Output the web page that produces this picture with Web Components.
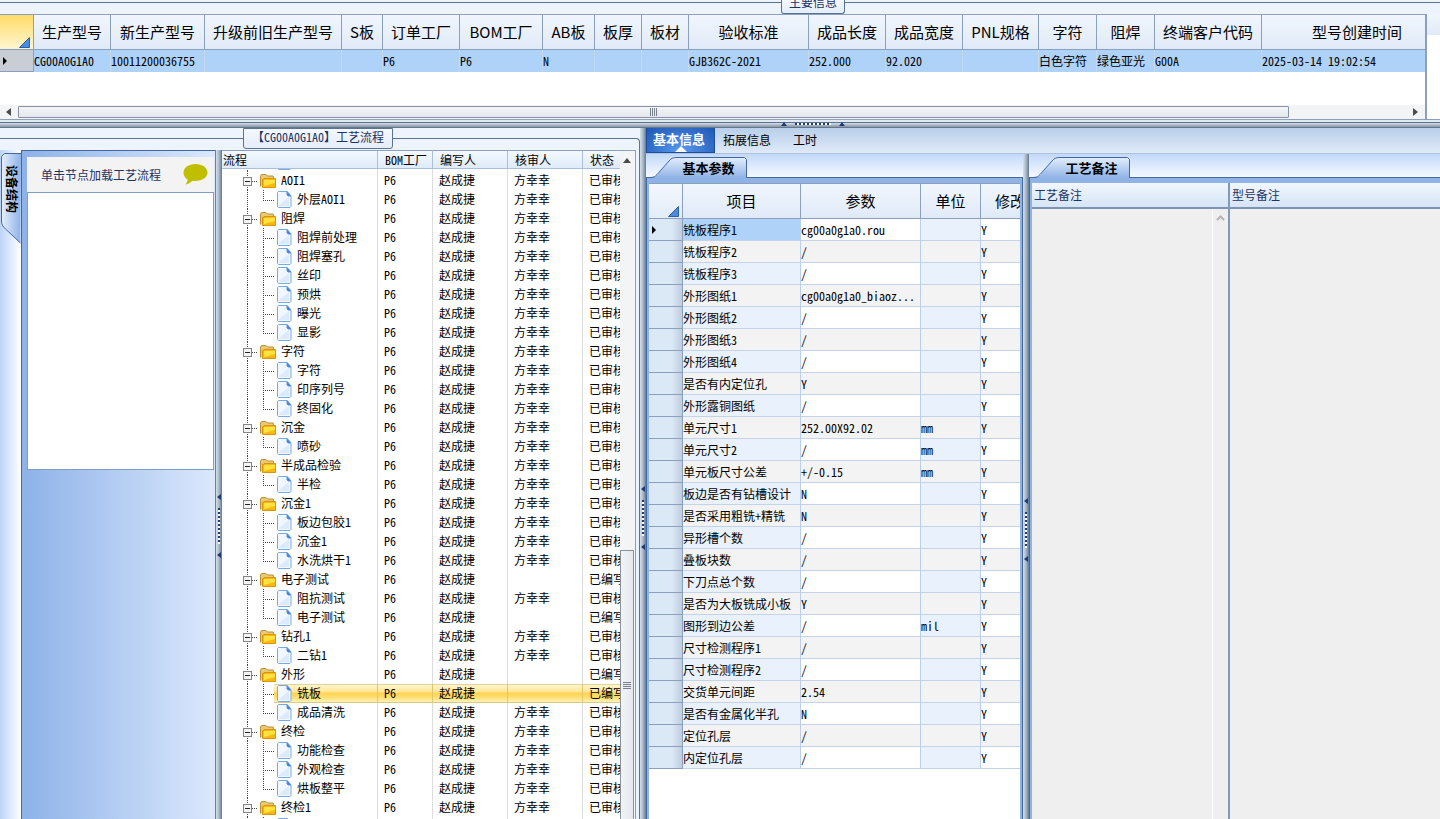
<!DOCTYPE html>
<html lang="zh-CN">
<head>
<meta charset="UTF-8">
<title>工艺流程</title>
<style>
    html, body {
        height: 100%;
        margin: 0;
        overflow: hidden;
    }

    body {
        display: flex;
        flex-direction: column;
        background: #ebf3fd;
        color: #000;
        font: 12px/16px "Noto Sans Mono CJK SC", "Noto Sans CJK SC", "Liberation Sans", sans-serif;
        font-variant-ligatures: none;
        --line: #8aa0bd;
        --dark: #5b7290;
        --blue: #8fb3e6;
        --ink: #1e3264;
    }

    .top {
        display: flex;
        height: 105px;
        border-bottom: 1px solid var(--line);
    }

    .top-left {
        display: flex;
        flex: 1;
        flex-direction: column;
        min-width: 0;
        background: #fff;
    }

    .top-left data-grid {
        flex: 1;
        min-height: 0;
    }

    .top-rest {
        width: 13px;
        border-left: 2px solid var(--line);
        background: linear-gradient(#f1f6fd, #e0eaf7) top / 100% 21px no-repeat #fff;
    }

    .main {
        display: flex;
        flex: 1;
        min-height: 0;
    }

    .flow {
        display: flex;
        flex: 0 0 640px;
        min-width: 0;
    }

    .flow group-panel {
        flex: 1;
        min-width: 0;
    }

    .flow-body {
        display: flex;
        flex: 1;
        min-height: 0;
    }

    .info {
        display: flex;
        flex: 1;
        flex-direction: column;
        min-width: 0;
    }

    .info-body {
        display: flex;
        flex: 1;
        min-height: 0;
    }

    .params {
        flex: 0 0 377px;
    }

    .notes {
        flex: 1;
        min-width: 0;
    }
</style>
</head>
<body>
    <group-panel label="主要信息" class="main-info">
        <div class="top">
            <div class="top-left">
                <data-grid id="models"></data-grid>
                <scroll-bar></scroll-bar>
            </div>
            <div class="top-rest"></div>
        </div>
    </group-panel>
    <split-bar style="--grip: 784px"></split-bar>
    <div class="main">
        <div class="flow">
            <group-panel label="【CG00A0G1A0】工艺流程" framed>
                <div class="flow-body">
                    <device-panel></device-panel>
                    <split-bar vertical style="--grip: 344px"></split-bar>
                    <flow-tree></flow-tree>
                    <scroll-bar vertical></scroll-bar>
                </div>
            </group-panel>
        </div>
        <split-bar vertical style="--grip: 358px"></split-bar>
        <div class="info">
            <info-tabs></info-tabs>
            <div class="info-body">
                <tab-page label="基本参数" class="params">
                    <data-grid id="params" boxed></data-grid>
                </tab-page>
                <split-bar vertical style="--grip: 344px"></split-bar>
                <tab-page label="工艺备注" class="notes" open-end>
                    <note-panel></note-panel>
                </tab-page>
            </div>
        </div>
    </div>

<script>
// 分组框
class GroupPanel extends HTMLElement {
    constructor() {
        super();
        this.attachShadow({mode: 'open'});
    }

    connectedCallback() {
        const label = this.getAttribute('label');

        this.shadowRoot.innerHTML = `
            <style>
                :host {
                    display: flex;
                    flex-direction: column;
                    background: linear-gradient(#edf4fd, #e8f1fc);
                }

                .head {
                    display: flex;
                    height: 14px;
                    color: var(--ink);
                }

                .rule {
                    height: 2px;
                    box-sizing: border-box;
                    border-bottom: 1px solid var(--dark);
                    margin-top: 1px;
                }

                .before { flex: 781; }
                .after { flex: 595; }

                .label {
                    display: flex;
                    align-items: flex-end;
                    box-sizing: border-box;
                    padding: 0 7px;
                    border: 1px solid var(--dark);
                    border-top: 0;
                    border-radius: 0 0 3px 3px;
                    line-height: 22px;
                    background: linear-gradient(#f4f8fe, #e4edf9);
                    white-space: nowrap;
                }

                .body {
                    display: flex;
                    flex: 1;
                    flex-direction: column;
                    min-height: 0;
                }

                :host([framed]) .head { height: 22px; }
                :host([framed]) .label {
                    height: 21px;
                    padding: 0 8px;
                    border-top: 1px solid var(--dark);
                    align-items: flex-start;
                    line-height: 16px;
                }
                :host([framed]) .rule { height: 10px; }
                :host([framed]) .before { flex: 243; }
                :host([framed]) .after {
                    flex: 246;
                    height: 12px;
                    margin-top: 10px;
                    border-top: 1px solid var(--dark);
                    border-right: 1px solid var(--dark);
                    border-bottom: 0;
                    border-radius: 0 4px 0 0;
                }
                :host([framed]) .body {
                    border-right: 1px solid var(--dark);
                    padding-right: 3px;
                }
            </style>
            <div class="head">
                <div class="rule before"></div>
                <div class="label">${label}</div>
                <div class="rule after"></div>
            </div>
            <div class="body"><slot></slot></div>
        `;
    }
}
customElements.define('group-panel', GroupPanel);

// 分隔条
class SplitBar extends HTMLElement {
    constructor() {
        super();
        this.attachShadow({mode: 'open'});
    }

    connectedCallback() {
        this.shadowRoot.innerHTML = `
            <style>
                :host {
                    display: flex;
                    flex: none;
                    align-items: center;
                    gap: 8px;
                    box-sizing: border-box;
                    height: 8px;
                    padding-left: calc(var(--grip) - 3px);
                    border-bottom: 1px solid #63788f;
                    background: linear-gradient(#e1e9f5 2px, #5b7290 2px, #5b7290 3px, #d8dfe5 3px, #8494a3);
                }

                :host([vertical]) {
                    flex-direction: column;
                    width: 6px;
                    height: auto;
                    padding: var(--grip) 0 0;
                    border: 0;
                    background: linear-gradient(90deg, #d4dfea, #a9b8c8 3px, #63788f 6px);
                }

                .arrow {
                    flex: none;
                    border: solid transparent;
                    border-width: 0 3px 4px;
                    border-bottom-color: #1f3a72;
                }

                .dots {
                    flex: none;
                    width: 36px;
                    height: 2px;
                    background: repeating-linear-gradient(90deg, #1f3a72 0 2px, #fff 2px 4px);
                }

                :host([vertical]) .arrow {
                    border-width: 3px 4px 3px 0;
                    border-color: transparent;
                    border-right-color: #1f3a72;
                }

                :host([vertical]) .dots {
                    width: 2px;
                    height: 36px;
                    background: repeating-linear-gradient(#1f3a72 0 2px, #fff 2px 4px);
                }
            </style>
            <span class="arrow"></span>
            <span class="dots"></span>
            <span class="arrow"></span>
        `;
    }
}
customElements.define('split-bar', SplitBar);

// 滚动条
class ScrollBar extends HTMLElement {
    constructor() {
        super();
        this.attachShadow({mode: 'open'});
    }

    connectedCallback() {
        this.shadowRoot.innerHTML = `
            <style>
                :host {
                    display: flex;
                    flex: none;
                    align-items: center;
                    gap: 5px;
                    height: 14px;
                    padding: 0 7px 0 6px;
                    background: #f3f4f6;
                }

                .prev, .next {
                    flex: none;
                    border: solid transparent;
                    border-width: 4px 5px 4px 0;
                    border-right-color: #4b4b4b;
                }

                .next {
                    border-width: 4px 0 4px 5px;
                    border-left-color: #4b4b4b;
                }

                .track {
                    display: flex;
                    flex: 1;
                    padding: 0 4px 0 2px;
                    min-height: 0;
                }

                .track::after {
                    content: "";
                    flex: 115;
                }

                .thumb {
                    display: flex;
                    align-items: center;
                    justify-content: center;
                    box-sizing: border-box;
                    flex: 1270;
                    height: 12px;
                    border: 1px solid #87919f;
                    border-radius: 1px;
                    background: linear-gradient(#f2f4f7, #e4e8ed);
                }

                .grip {
                    width: 7px;
                    height: 8px;
                    background: repeating-linear-gradient(90deg, #77808c 0 1px, transparent 1px 2px);
                }

                :host([vertical]) {
                    flex-direction: column;
                    gap: 0;
                    width: 14px;
                    height: auto;
                    padding: 7px 1px 0 0;
                    border-top: 1px solid var(--line);
                    border-right: 1px solid var(--line);
                }

                :host([vertical]) .prev {
                    border-color: transparent;
                    border-width: 0 4px 5px;
                    border-bottom-color: #4b4b4b;
                }

                :host([vertical]) .next,
                :host([vertical]) .track::after {
                    display: none;
                }

                :host([vertical]) .track {
                    flex-direction: column;
                    justify-content: flex-end;
                    padding: 0;
                }

                :host([vertical]) .thumb {
                    flex: 0 0 41%;
                    width: 14px;
                    border-bottom: 0;
                    background: linear-gradient(90deg, #f2f4f7, #e4e8ed);
                }

                :host([vertical]) .grip {
                    width: 8px;
                    height: 7px;
                    background: repeating-linear-gradient(#77808c 0 1px, transparent 1px 2px);
                }
            </style>
            <span class="prev"></span>
            <div class="track"><div class="thumb"><div class="grip"></div></div></div>
            <span class="next"></span>
        `;
    }
}
customElements.define('scroll-bar', ScrollBar);

// 数据表格
class DataGrid extends HTMLElement {
    constructor() {
        super();
        this.attachShadow({mode: 'open'});
    }

    set data({columns, rows, spill}) {
        const cols = columns.map(c => `<col${c[1] ? ` style="width:${c[1]}px"` : ''}>`).join('');
        const heads = columns.map(c => `<th>${c[0]}</th>`).join('');
        const body = rows.map((r, i) => `
            <tr>
                <th class="row">${i ? '' : '<i></i>'}</th>
                ${r.map(v => `<td>${v}</td>`).join('')}
            </tr>`).join('');

        this.shadowRoot.innerHTML = `
            <style>
                :host {
                    display: block;
                    overflow: hidden;
                    background: #fff;
                }

                table {
                    width: calc(100% + ${spill}px);
                    table-layout: fixed;
                    border-spacing: 0;
                }

                th, td {
                    box-sizing: border-box;
                    padding: 0;
                    overflow: hidden;
                    white-space: nowrap;
                    font-weight: 400;
                }

                thead th {
                    height: 36px;
                    border: solid var(--line);
                    border-width: 1px 1px 1px 0;
                    background: linear-gradient(#f1f6fd, #e0eaf7);
                    font-size: 15px;
                    font-family: "Noto Sans CJK SC", sans-serif;
                }

                thead .corner {
                    padding-right: 3px;
                    background: linear-gradient(#ffdc66, #fff6d2);
                }

                .corner svg {
                    display: block;
                    margin: 20px 0 0 auto;
                }

                td {
                    height: 22px;
                    border-right: 1px solid #c3d8f1;
                    background: #aed2f8;
                    text-overflow: ellipsis;
                }

                .row {
                    height: 22px;
                    border: solid var(--line);
                    border-width: 0 1px 1px 0;
                    background: #c8cdd6;
                }

                .row i {
                    display: block;
                    width: 0;
                    margin-left: 3px;
                    border: solid transparent;
                    border-width: 4px 0 4px 4px;
                    border-left-color: #000;
                }

                :host([boxed]) thead .corner {
                    background: linear-gradient(#f4f8fd, #e3ecf8);
                }

                :host([boxed]) .row {
                    background: linear-gradient(90deg, #dbe8f5 70%, #becde0);
                }

                :host([boxed]) td {
                    border-bottom: 1px solid #c3d3ea;
                    border-right-color: #b9cfec;
                    background: #fff;
                }

                :host([boxed]) td:nth-child(2),
                :host([boxed]) td:nth-child(4) {
                    background: #e8f1fc;
                }

                :host([boxed]) tbody tr:nth-child(even) td {
                    background: #f3f3f3;
                }

                :host([boxed]) tbody tr:first-child td:nth-child(2) {
                    background: #aed2f8;
                }
            </style>
            <table>
                <colgroup><col style="width:34px">${cols}</colgroup>
                <thead>
                    <tr>
                        <th class="corner">
                            <svg width="11" height="11" viewBox="0 0 11 11"><path d="M10.500 .5v10H.5z" fill="#4a8ae0" stroke="#2b5fa8"/></svg>
                        </th>
                        ${heads}
                    </tr>
                </thead>
                <tbody>${body}</tbody>
            </table>
        `;
    }
}
customElements.define('data-grid', DataGrid);

document.getElementById('models').data = {
    spill: 28,
    columns: [
        ['生产型号', 77], ['新生产型号', 94], ['升级前旧生产型号', 137], ['S板', 41],
        ['订单工厂', 77], ['BOM工厂', 83], ['AB板', 52], ['板厚', 47], ['板材', 47],
        ['验收标准', 120], ['成品长度', 77], ['成品宽度', 77], ['PNL规格', 76],
        ['字符', 58], ['阻焊', 58], ['终端客户代码', 107], ['型号创建时间', 0]
    ],
    rows: [
        ['CG00A0G1A0', '10011200036755', '', '', 'P6', 'P6', 'N', '', '', 'GJB362C-2021',
            '252.000', '92.020', '', '白色字符', '绿色亚光', 'G00A', '2025-03-14 19:02:54']
    ]
};

document.getElementById('params').data = {
    spill: 20,
    columns: [['项目', 118], ['参数', 120], ['单位', 60], ['修改', 0]],
    rows: [
        ['铣板程序1', 'cg00a0g1a0.rou', ''],
        ['铣板程序2', '/', ''],
        ['铣板程序3', '/', ''],
        ['外形图纸1', 'cg00a0g1a0_biaoz...', ''],
        ['外形图纸2', '/', ''],
        ['外形图纸3', '/', ''],
        ['外形图纸4', '/', ''],
        ['是否有内定位孔', 'Y', ''],
        ['外形露铜图纸', '/', ''],
        ['单元尺寸1', '252.00X92.02', 'mm'],
        ['单元尺寸2', '/', 'mm'],
        ['单元板尺寸公差', '+/-0.15', 'mm'],
        ['板边是否有钻槽设计', 'N', ''],
        ['是否采用粗铣+精铣', 'N', ''],
        ['异形槽个数', '/', ''],
        ['叠板块数', '/', ''],
        ['下刀点总个数', '/', ''],
        ['是否为大板铣成小板', 'Y', ''],
        ['图形到边公差', '/', 'mil'],
        ['尺寸检测程序1', '/', ''],
        ['尺寸检测程序2', '/', ''],
        ['交货单元间距', '2.54', ''],
        ['是否有金属化半孔', 'N', ''],
        ['定位孔层', '/', ''],
        ['内定位孔层', '/', '']
    ].map(r => [...r, 'Y'])
};

// 左侧设备结构
class DevicePanel extends HTMLElement {
    constructor() {
        super();
        this.attachShadow({mode: 'open'});
    }

    connectedCallback() {
        this.shadowRoot.innerHTML = `
            <style>
                :host {
                    display: flex;
                    flex: 0 0 216px;
                    box-sizing: border-box;
                    border-right: 1px solid #5f83b8;
                }

                .rail {
                    flex: 0 0 20px;
                    background: linear-gradient(90deg, #bdd4f8, #fff);
                }

                button {
                    position: relative;
                    display: flex;
                    align-items: flex-start;
                    box-sizing: border-box;
                    width: 21px;
                    height: 92px;
                    margin-top: 3px;
                    padding: 12px 0 0 4px;
                    border: 0;
                    background: none;
                    color: #000;
                    font: inherit;
                    font-weight: 700;
                }

                button svg {
                    position: absolute;
                    inset: 0;
                }

                button span {
                    position: relative;
                    writing-mode: vertical-rl;
                    text-orientation: sideways;
                }

                .page {
                    display: flex;
                    flex: 1;
                    flex-direction: column;
                    padding: 6px 1px 0 5px;
                    border: solid #41689f;
                    border-width: 1px 0 0 1px;
                    background: linear-gradient(90deg, #8db2e9, #dbe8fc);
                }

                .hint {
                    display: flex;
                    align-items: center;
                    justify-content: space-between;
                    height: 35px;
                    padding: 0 6px 0 14px;
                    background: #f3f3f3;
                    color: var(--ink);
                }

                textarea {
                    height: 278px;
                    box-sizing: border-box;
                    padding: 4px;
                    border: 1px solid #7f9dc4;
                    outline: 0;
                    resize: none;
                    background: #fff;
                }
            </style>
            <div class="rail">
                <button type="button">
                    <svg width="21" height="92" viewBox="0 0 21 92">
                        <defs>
                            <linearGradient id="g"><stop stop-color="#e6effd"/><stop offset="1" stop-color="#8db2e9"/></linearGradient>
                        </defs>
                        <path d="M21 .5H4.500L1.500 3.500V68c0 4 2 6 4 8l15 14" fill="url(#g)" stroke="#41689f"/>
                    </svg>
                    <span>设备结构</span>
                </button>
            </div>
            <div class="page">
                <div class="hint">
                    <label for="flow">单击节点加载工艺流程</label>
                    <svg width="25" height="21" viewBox="0 0 25 21">
                        <path d="M12.500 0C19.500 0 24.500 3.800 24.500 8.500S19.500 17 12.500 17c-1 0-2-.1-3-.3C7.500 18.700 5 20 2.500 20.500c1.200-1.500 2-3.200 2.200-5C2 14 .5 11.500.5 8.500.500 3.800 5.500 0 12.500 0z" fill="#bfbf00"/>
                    </svg>
                </div>
                <textarea id="flow"></textarea>
            </div>
        `;
    }
}
customElements.define('device-panel', DevicePanel);

// 工艺流程树: [节点, 子节点...], 带 * 为已编写, 带 ! 为选中
const flows = [
    ['', '阻焊检验'],
    ['AOI1', '外层AOI1'],
    ['阻焊', '阻焊前处理', '阻焊塞孔', '丝印', '预烘', '曝光', '显影'],
    ['字符', '字符', '印序列号', '终固化'],
    ['沉金', '喷砂'],
    ['半成品检验', '半检'],
    ['沉金1', '板边包胶1', '沉金1', '水洗烘干1'],
    ['电子测试*', '阻抗测试', '电子测试*'],
    ['钻孔1', '二钻1'],
    ['外形*', '铣板*!', '成品清洗'],
    ['终检', '功能检查', '外观检查', '烘板整平'],
    ['终检1', '终检']
];

const folderIcon = `
    <svg class="icon" width="16" height="14" viewBox="0 0 16 14">
        <path d="M.5 12.500V2l1-1.500h4.500L7.500 2H13l.5 1v2" fill="#e9c878" stroke="#b98f35"/>
        <path d="M2.500 13.500V5.500h1.500V4.500H15.500V13.500z" fill="#fbb80f" stroke="#d9930c"/>
        <path d="M4 6h11v3L4 12z" fill="#ffe23f"/>
    </svg>`;

const pageIcon = `
    <svg class="icon" width="15" height="17" viewBox="0 0 15 17">
        <path d="M1.500.5h8.500l4 4.500v10.500l-1 1h-11.500l-1-1v-14z" fill="#f0f7ff" stroke="#79a9e4"/>
        <path d="M2 14 12 6v9H2z" fill="#dcebfc"/>
        <path d="M10 .5V4l1 1h3z" fill="#3f7fd6" stroke="#5d95df"/>
    </svg>`;

class FlowTree extends HTMLElement {
    constructor() {
        super();
        this.attachShadow({mode: 'open'});
    }

    row(text, kind) {
        const name = text.replace(/[*!]/g, '');
        const edited = text.includes('*');
        const icon = kind === 'node' ? folderIcon : pageIcon;
        return `
            <tr class="${kind}${text.includes('!') ? ' picked' : ''}">
                <td><div class="name"><span class="lines"></span>${icon}<span class="text">${name}</span></div></td>
                <td>P6</td>
                <td>赵成捷</td>
                <td>${edited ? '' : '方幸幸'}</td>
                <td>${edited ? '已编写' : '已审核'}</td>
            </tr>`;
    }

    connectedCallback() {
        const rows = flows.map(([node, ...leaves]) =>
            (node ? this.row(node, 'node') : '') +
            leaves.map((leaf, i) => this.row(leaf, i === leaves.length - 1 ? 'leaf last' : 'leaf')).join('')
        ).join('');

        this.shadowRoot.innerHTML = `
            <style>
                :host {
                    display: block;
                    flex: 1;
                    min-width: 0;
                    overflow: hidden;
                    background: #fff;
                }

                .view {
                    height: 100%;
                    overflow: hidden;
                }

                table {
                    width: 100%;
                    table-layout: fixed;
                    border-spacing: 0;
                }

                th, td {
                    box-sizing: border-box;
                    overflow: hidden;
                    white-space: nowrap;
                    text-align: left;
                    font-weight: 400;
                }

                th {
                    position: sticky;
                    top: 0;
                    z-index: 1;
                    height: 19px;
                    padding: 0 0 0 7px;
                    border: solid #a9bfdc;
                    border-width: 1px 1px 1px 0;
                    border-top-color: var(--line);
                    background: linear-gradient(#f4f9fe, #dfebf9);
                }

                th:first-child { padding-left: 1px; }
                th:last-child, td:last-child { border-right: 0; }

                td {
                    height: 19px;
                    padding: 0 0 2px 6px;
                    border-right: 1px solid #dcdcdc;
                }

                td:first-child { padding: 0; }

                .name {
                    display: flex;
                    align-items: center;
                    height: 19px;
                    padding-left: 25px;
                    background: repeating-linear-gradient(#444 0 1px, transparent 1px 2px) 25px 0 / 1px 100% no-repeat;
                }

                .lines {
                    position: relative;
                    flex: none;
                    width: 13px;
                    height: 19px;
                }

                .icon { flex: none; }
                .text { padding: 0 0 2px 5px; }

                .lines::before {
                    content: "";
                    position: absolute;
                    top: 10px;
                    right: 2px;
                    width: 6px;
                    height: 1px;
                    background: repeating-linear-gradient(90deg, #444 0 1px, transparent 1px 2px);
                }

                /* 展开框 */
                .node .lines::after {
                    content: "";
                    position: absolute;
                    top: 6px;
                    left: -4px;
                    width: 7px;
                    height: 7px;
                    border: 1px solid #848484;
                    background: linear-gradient(#222, #222) center / 5px 1px no-repeat #f4f4f4;
                }

                .leaf .lines { width: 30px; }
                .leaf .lines::before { width: 11px; right: 3px; }
                .leaf .lines::after {
                    content: "";
                    position: absolute;
                    top: 0;
                    left: 16px;
                    width: 1px;
                    height: 19px;
                    background: repeating-linear-gradient(#444 0 1px, transparent 1px 2px);
                }
                .last .lines::after { height: 10px; }

                .picked {
                    --gold: linear-gradient(#e4d398 1px, #fff5cf 1px, #ffe591 8px, #ffd34e 9px, #ffe07a 14px, #fff3b8 18px, #d8c88c 18px);
                }
                .picked td { background: var(--gold); border-right-color: #e2c66c; }
                .picked td:first-child { background: var(--gold) 52px 0 no-repeat; }
            </style>
            <div class="view">
                <table>
                    <colgroup>
                        <col style="width:156px"><col style="width:55px"><col style="width:75px"><col style="width:75px"><col>
                    </colgroup>
                    <thead>
                        <tr><th>流程</th><th>BOM工厂</th><th>编写人</th><th>核审人</th><th>状态</th></tr>
                    </thead>
                    <tbody>${rows}</tbody>
                </table>
            </div>
        `;
        this.shadowRoot.querySelector('.view').scrollTop = 17;
    }
}
customElements.define('flow-tree', FlowTree);

// 信息页签
class InfoTabs extends HTMLElement {
    constructor() {
        super();
        this.attachShadow({mode: 'open'});
    }

    connectedCallback() {
        this.shadowRoot.innerHTML = `
            <style>
                :host {
                    display: flex;
                    flex: none;
                    height: 25px;
                    border-bottom: 1px solid #adc2dc;
                    background: linear-gradient(#b9cfea, #dfeaf8);
                }

                button {
                    position: relative;
                    padding: 0 7px 2px 8px;
                    border: 0;
                    background: none;
                    color: #000;
                    font: inherit;
                }

                button + button + button { padding-left: 15px; }

                .active {
                    padding: 0 9px 2px 6px;
                    border: 1px solid #1d4e9e;
                    border-top: 0;
                    background: radial-gradient(ellipse at 50% 100%, #5a9af0, #1d57b4);
                    color: #fff;
                    font-size: 13px;
                    font-weight: 700;
                }

                .active::after {
                    content: "";
                    position: absolute;
                    bottom: 0;
                    left: 28px;
                    border: solid transparent;
                    border-width: 0 6px 6px;
                    border-bottom-color: #fff;
                }
            </style>
            <button type="button" class="active">基本信息</button>
            <button type="button">拓展信息</button>
            <button type="button">工时</button>
        `;
    }
}
customElements.define('info-tabs', InfoTabs);

// 斜角页签
class TabPage extends HTMLElement {
    constructor() {
        super();
        this.attachShadow({mode: 'open'});
    }

    connectedCallback() {
        const label = this.getAttribute('label');

        this.shadowRoot.innerHTML = `
            <style>
                :host {
                    display: flex;
                    flex-direction: column;
                    box-sizing: border-box;
                }

                .head {
                    height: 23px;
                    padding: 3px 0 0 4px;
                    box-sizing: border-box;
                    background: linear-gradient(#c3d9fa, #f5f9ff);
                }

                button {
                    position: relative;
                    display: block;
                    width: 99px;
                    height: 21px;
                    padding: 0 0 0 18px;
                    border: 0;
                    background: none;
                    color: #000;
                    font: inherit;
                    font-size: 13px;
                    font-weight: 700;
                }

                button svg {
                    position: absolute;
                    inset: 0;
                }

                button span { position: relative; }

                .body {
                    display: flex;
                    flex: 1;
                    min-height: 0;
                    padding: 5px 2px 0 2px;
                    border: solid #41689f;
                    border-width: 1px 1px 0;
                    background: var(--blue);
                }

                :host([open-end]) .body {
                    padding-right: 0;
                    border-right: 0;
                }

                ::slotted(*) {
                    flex: 1;
                    min-width: 0;
                }
            </style>
            <div class="head">
                <button type="button">
                    <svg width="99" height="21" viewBox="0 0 99 21">
                        <defs>
                            <linearGradient id="t" x2="0" y2="1"><stop stop-color="#e3eefd"/><stop offset="1" stop-color="#8fb3e6"/></linearGradient>
                        </defs>
                        <path d="M0 21c4 0 5-1 7-3L19 4c2-2.500 4-3.500 8-3.500h67.500l2 2V21z" fill="url(#t)"/>
                        <path d="M0 20.500c4 0 5-1 7-3L19 4c2-2.500 4-3.500 8-3.500h67.500l2 2V21" fill="none" stroke="#41689f"/>
                    </svg>
                    <span>${label}</span>
                </button>
            </div>
            <div class="body"><slot></slot></div>
        `;
    }
}
customElements.define('tab-page', TabPage);

// 备注
class NotePanel extends HTMLElement {
    constructor() {
        super();
        this.attachShadow({mode: 'open'});
    }

    connectedCallback() {
        this.shadowRoot.innerHTML = `
            <style>
                :host {
                    display: flex;
                }

                section {
                    display: flex;
                    flex: 1;
                    flex-direction: column;
                    min-width: 0;
                    background: #efefef;
                }

                .craft {
                    flex: 0 0 196px;
                    border-right: 2px solid #7f9ab9;
                }

                label {
                    height: 24px;
                    padding-left: 2px;
                    border-bottom: 2px solid #7d93b3;
                    background: linear-gradient(#f1f7fe, #d6e4f5);
                    color: var(--ink);
                    line-height: 24px;
                }

                .area {
                    display: flex;
                    flex: 1;
                }

                textarea {
                    flex: 1;
                    min-width: 0;
                    padding: 2px;
                    border: 0;
                    outline: 0;
                    resize: none;
                    background: #efefef;
                }

                .bar {
                    flex: none;
                    width: 15px;
                    padding-top: 6px;
                    border-left: 1px solid #fff;
                    text-align: center;
                    line-height: 0;
                }
            </style>
            <section class="craft">
                <label for="craft">工艺备注</label>
                <div class="area">
                    <textarea id="craft"></textarea>
                    <div class="bar">
                        <svg width="9" height="6" viewBox="0 0 9 6"><path d="M1 5l3.500-3.500L8 5" fill="none" stroke="#b4b4b4" stroke-width="2"/></svg>
                    </div>
                </div>
            </section>
            <section>
                <label for="model">型号备注</label>
                <div class="area"><textarea id="model"></textarea></div>
            </section>
        `;
    }
}
customElements.define('note-panel', NotePanel);
</script>
</body>
</html>
